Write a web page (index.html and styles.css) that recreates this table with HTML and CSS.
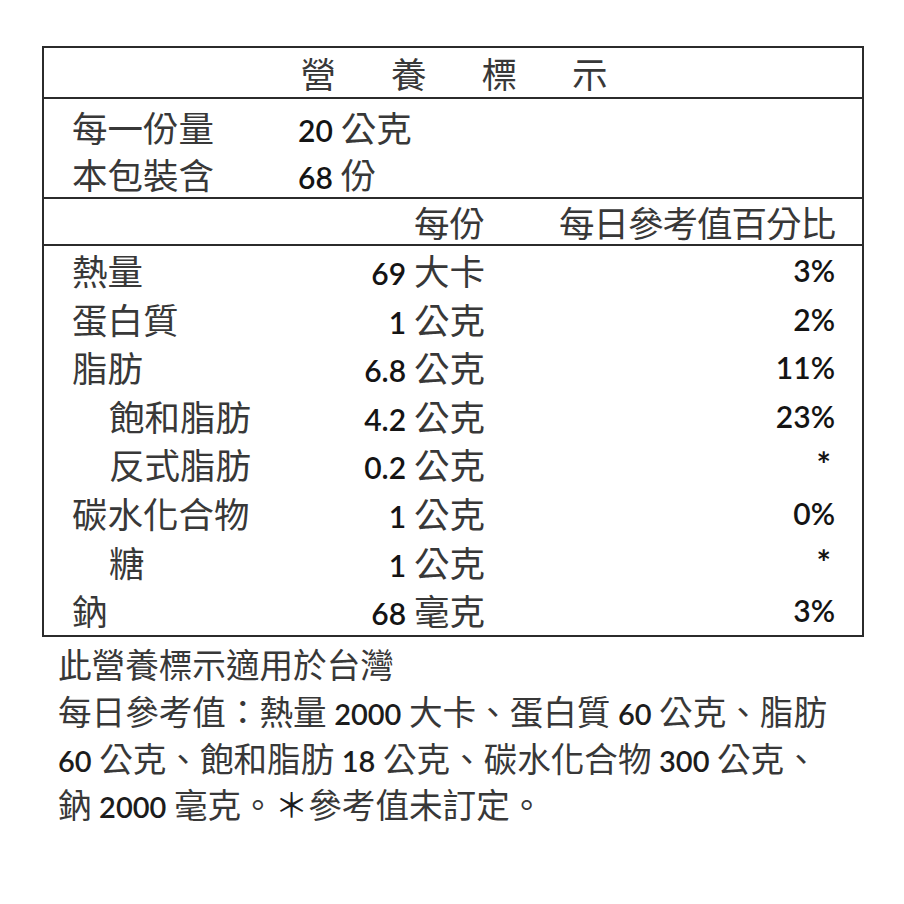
FILE: index.html
```html
<!DOCTYPE html>
<html lang="zh-Hant">
<head>
<meta charset="utf-8">
<title>營養標示</title>
<link rel="stylesheet" href="styles.css">
</head>
<body>
<div class="label">
  <div class="title"><span>營</span><span>養</span><span>標</span><span>示</span></div>
  <div class="serving">
    <div class="srow"><span class="k">每一份量</span><span class="v"><span class="num">20</span> 公克</span></div>
    <div class="srow"><span class="k">本包裝含</span><span class="v"><span class="num">68</span> 份</span></div>
  </div>
  <div class="grid head"><span></span><span class="val">每份</span><span class="pct">每日參考值百分比</span></div>
  <div class="body">
    <div class="grid row"><span class="name">熱量</span><span class="val"><span class="num">69</span> 大卡</span><span class="pct num">3%</span></div>
    <div class="grid row"><span class="name">蛋白質</span><span class="val"><span class="num">1</span> 公克</span><span class="pct num">2%</span></div>
    <div class="grid row"><span class="name">脂肪</span><span class="val"><span class="num">6.8</span> 公克</span><span class="pct num">11%</span></div>
    <div class="grid row"><span class="name sub">飽和脂肪</span><span class="val"><span class="num">4.2</span> 公克</span><span class="pct num">23%</span></div>
    <div class="grid row"><span class="name sub">反式脂肪</span><span class="val"><span class="num">0.2</span> 公克</span><span class="pct num ast">*</span></div>
    <div class="grid row"><span class="name">碳水化合物</span><span class="val"><span class="num">1</span> 公克</span><span class="pct num">0%</span></div>
    <div class="grid row"><span class="name sub">糖</span><span class="val"><span class="num">1</span> 公克</span><span class="pct num ast">*</span></div>
    <div class="grid row"><span class="name">鈉</span><span class="val"><span class="num">68</span> 毫克</span><span class="pct num">3%</span></div>
  </div>
</div>
<div class="notes">
  <p class="note1">此營養標示適用於台灣</p>
  <p class="note2">每日參考值：熱量 <span class="num">2000</span> 大卡、蛋白質 <span class="num">60</span> 公克、脂肪<br><span class="num">60</span> 公克、飽和脂肪 <span class="num">18</span> 公克、碳水化合物 <span class="num">300</span> 公克、<br>鈉 <span class="num">2000</span> 毫克。<span class="star">＊</span>參考值未訂定。</p>
</div>
</body>
</html>
```

FILE: styles.css
```css
html, body {
  margin: 0;
  padding: 0;
  background: #fff;
}

body {
  font-family: "Noto Sans CJK TC", "Noto Sans CJK SC", sans-serif;
  color: #383838;
}

.num {
  font-family: "Lato", "Noto Sans CJK TC", sans-serif;
  font-size: 30px;
  font-weight: 600;
  line-height: 1;
  color: #141414;
}

.label {
  margin: 46px 0 0 42px;
  width: 822px;
  box-sizing: border-box;
  border: 2px solid #2b2b2b;
  font-size: 35.5px;
}

.title {
  display: flex;
  justify-content: center;
  gap: 55px;
  height: 49px;
  line-height: 50px;
  border-bottom: 2px solid #2b2b2b;
  padding-left: 2px;
}

.serving {
  height: 100px;
  box-sizing: border-box;
  padding: 4px 0 0 28px;
  border-bottom: 2px solid #2b2b2b;
}

.srow {
  display: grid;
  grid-template-columns: 226px 1fr;
  height: 47px;
  line-height: 48px;
}

.grid {
  display: grid;
  grid-template-columns: 240px 173px 350px;
  padding: 0 0 0 28px;
}

.head {
  height: 45px;
  line-height: 46px;
  border-bottom: 2px solid #2b2b2b;
}

.head .pct {
  letter-spacing: -1px;
}

.body {
  height: 389px;
}

.row {
  height: 48.6px;
  line-height: 48.6px;
}

.val, .pct {
  text-align: right;
  white-space: nowrap;
}

.pct.num {
  font-size: 30px;
  line-height: 48.6px;
}

.pct.ast {
  font-size: 34px;
  font-weight: 700;
  padding-right: 4px;
}

.name.sub {
  padding-left: 37px;
}

.notes {
  padding-left: 58px;
  font-size: 33.6px;
}

.notes p {
  margin: 0;
}

.note1 {
  padding-top: 3px;
  height: 48px;
  line-height: 48px;
}

.note2 {
  margin-top: 6px;
  line-height: 46.5px;
}

.notes .num {
  font-size: 29px;
  color: #1c1c1c;
}

.star {
  color: #1c1c1c;
}
```
